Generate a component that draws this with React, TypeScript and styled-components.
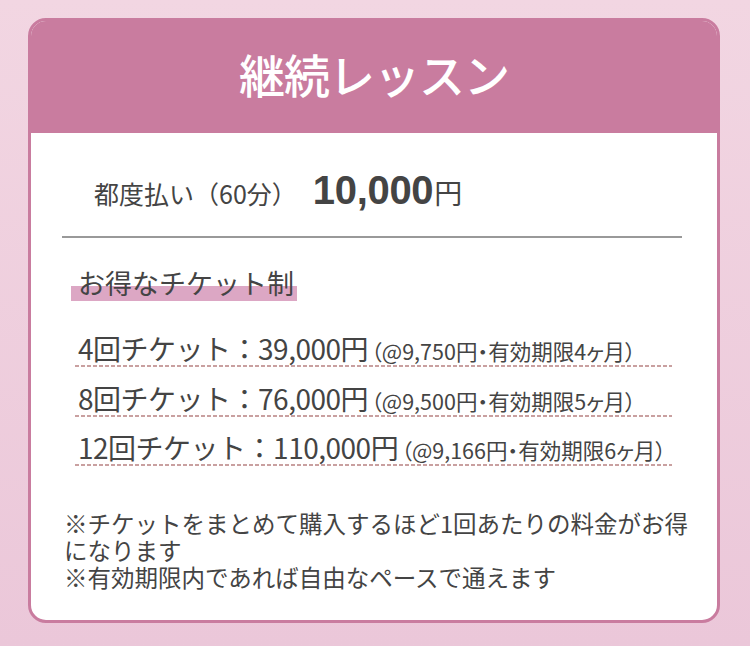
import styled, { createGlobalStyle } from "styled-components";

const GlobalStyle = createGlobalStyle`
    * {
        box-sizing: border-box;
    }

    body {
        margin: 0;
        font-family: "Noto Sans CJK JP", "Noto Sans", sans-serif;
        color: #444;
    }
`;

const pink = "#c97c9f";

interface Ticket {
    count: number;
    price: string;
    unit: string;
    months: number;
}

const tickets: Ticket[] = [
    { count: 4, price: "39,000", unit: "9,750", months: 4 },
    { count: 8, price: "76,000", unit: "9,500", months: 5 },
    { count: 12, price: "110,000", unit: "9,166", months: 6 },
];

const App = () => {
    return (
        <Page>
            <GlobalStyle />
            <Card>
                <Header>
                    <Title>継続レッスン</Title>
                </Header>

                <Body>
                    <PriceRow>
                        <Label>都度払い（60分）</Label>
                        <Amount>10,000</Amount>
                        <Yen>円</Yen>
                    </PriceRow>

                    <Divider />

                    <Heading>
                        <Marker>お得なチケット制</Marker>
                    </Heading>

                    <TicketList>
                        {tickets.map((t) => (
                            <TicketRow key={t.count}>
                                {t.count}回チケット：{t.price}円
                                <Note>
                                    （@{t.unit}円・有効期限{t.months}ヶ月）
                                </Note>
                            </TicketRow>
                        ))}
                    </TicketList>

                    <Remarks>
                        <p>
                            ※チケットをまとめて購入するほど1回あたりの料金がお得になります
                        </p>
                        <p>※有効期限内であれば自由なペースで通えます</p>
                    </Remarks>
                </Body>
            </Card>
        </Page>
    );
};

const Page = styled.div`
    width: 750px;
    height: 646px;
    padding: 18px 30px 0 28px;

    background: linear-gradient(180deg, #f2d6e2 0%, #ebc7d9 100%);
`;

const Card = styled.div`
    width: 692px;
    height: 605px;

    border: 3px solid ${pink};
    border-radius: 18px;
    overflow: hidden;

    background: white;
`;

const Header = styled.div`
    display: flex;
    justify-content: center;
    align-items: center;

    height: 112px;

    background: ${pink};
`;

const Title = styled.h1`
    margin: 0 0 8px;

    font-size: 46px;
    font-weight: 500;
    letter-spacing: -1px;
    color: white;
`;

const Body = styled.div`
    padding: 37px 0 0;
`;

const PriceRow = styled.div`
    display: flex;
    align-items: baseline;

    padding-left: 63px;

    font-size: 25px;
    line-height: 40px;
`;

const Label = styled.span`
    margin-right: 16px;
`;

const Amount = styled.span`
    font-family: "Liberation Sans", Arial, sans-serif;
    font-size: 40px;
    font-weight: 700;
    letter-spacing: -0.3px;
`;

const Yen = styled.span`
    margin-left: 1px;
    font-size: 28px;
`;

const Divider = styled.hr`
    margin: 23px 35px 0 31px;

    border: none;
    border-top: 2px solid #999;
`;

const Heading = styled.div`
    margin: 27px 0 0 40px;

    font-size: 27px;
    line-height: 36px;
`;

const Marker = styled.span`
    display: inline-block;

    padding: 0 3px 0 7px;

    background: linear-gradient(transparent 58%, #dca7c4 58%);
`;

const TicketList = styled.div`
    display: flex;
    flex-direction: column;
    gap: 14.5px;

    margin: 31px 45px 0 44px;
`;

const TicketRow = styled.div`
    padding-left: 3px;

    font-size: 28px;
    line-height: 33px;
    letter-spacing: -0.5px;
    white-space: nowrap;

    background: linear-gradient(to right, #c9a0a0 60%, transparent 0) repeat-x
        left bottom / 6px 2px;
`;

const Note = styled.span`
    margin-left: 3px;

    font-size: 21.5px;
    letter-spacing: 0;
    font-feature-settings: "palt";
`;

const Remarks = styled.div`
    margin: 44px 26px 0 33px;

    font-size: 23.5px;
    line-height: 27px;

    & p {
        margin: 0;
    }
`;

export default App;
